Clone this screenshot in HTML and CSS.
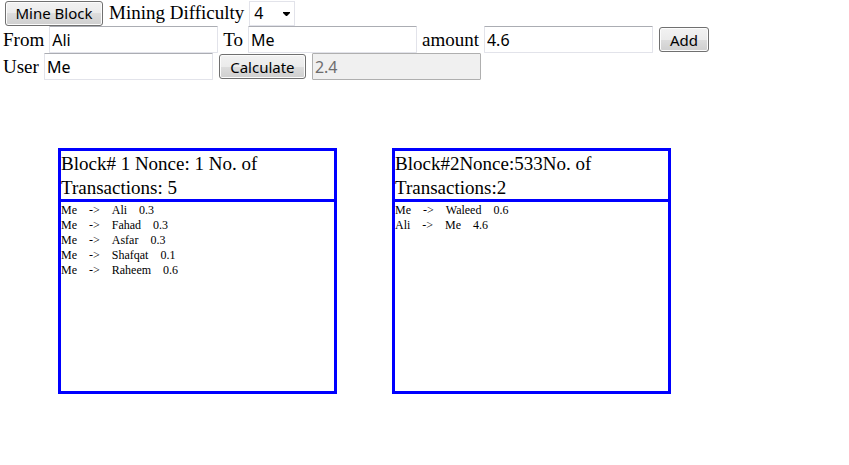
FILE: index.html
```html
<!DOCTYPE html>
<html lang="en">
<head>
<meta charset="utf-8">
<title>Block Chain</title>
<link rel="stylesheet" href="styles.css">
</head>
<body>
<form class="controls">
  <div class="row row-mine">
    <button type="button" class="btn btn-mine">Mine Block</button>
    <label for="difficulty">Mining Difficulty</label>
    <span class="select-wrap"><select id="difficulty" class="select"><option>4</option></select><svg class="arrow" viewBox="0 0 7 4" aria-hidden="true"><path d="M0 0h7v1L4 4H3L0 1z"/></svg></span>
  </div>
  <div class="row">
    <label for="from">From</label>
    <input id="from" class="field" type="text" value="Ali">
    <label for="to">To</label>
    <input id="to" class="field" type="text" value="Me">
    <label for="amount">amount</label>
    <input id="amount" class="field" type="text" value="4.6">
    <button type="button" class="btn btn-add">Add</button>
  </div>
  <div class="row">
    <label for="user">User</label>
    <input id="user" class="field" type="text" value="Me">
    <button type="button" class="btn btn-calc">Calculate</button>
    <input class="field" type="text" value="2.4" aria-label="Balance" disabled>
  </div>
</form>
<main class="chain">
  <section class="block">
    <h2 class="block-head">Block# 1 Nonce: 1 No. of Transactions: 5</h2>
    <ul class="list">
      <li><span>Me</span><span>-&gt;</span><span>Ali</span><span>0.3</span></li>
      <li><span>Me</span><span>-&gt;</span><span>Fahad</span><span>0.3</span></li>
      <li><span>Me</span><span>-&gt;</span><span>Asfar</span><span>0.3</span></li>
      <li><span>Me</span><span>-&gt;</span><span>Shafqat</span><span>0.1</span></li>
      <li><span>Me</span><span>-&gt;</span><span>Raheem</span><span>0.6</span></li>
    </ul>
  </section>
  <section class="block">
    <h2 class="block-head">Block#2Nonce:533No. of Transactions:2</h2>
    <ul class="list">
      <li><span>Me</span><span>-&gt;</span><span>Waleed</span><span>0.6</span></li>
      <li><span>Ali</span><span>-&gt;</span><span>Me</span><span>4.6</span></li>
    </ul>
  </section>
</main>
</body>
</html>
```
FILE: styles.css
```css
* { box-sizing: border-box; }
body {
  margin: 0;
  background: #fff;
  color: #000;
  font-family: "Liberation Serif", "Times New Roman", serif;
  font-size: 19px;
}
.controls { padding-left: 3px; }
.row {
  display: flex;
  align-items: center;
  gap: 5px;
  height: 27px;
}
.row-mine {
  height: 26px;
  padding-left: 1px;
}
.btn, .field, .select {
  font-family: "Noto Sans", "Open Sans", sans-serif;
  font-size: 16px;
  line-height: 20px;
  color: #000;
}
.btn {
  height: 25px;
  margin: 0 1px;
  padding: 0;
  border: 1px solid #707070;
  border-radius: 3px;
  background: linear-gradient(#f2f2f2, #ebebeb 50%, #dddddd 50%, #cfcfcf);
  box-shadow: inset 0 0 0 1px #fcfcfc;
  font-size: 15px;
}
.btn-mine { width: 98px; }
.btn-add { width: 50px; }
.btn-calc { width: 87px; }
.field {
  width: 169px;
  height: 27px;
  padding: 0 2px;
  border: 1px solid #e2e3ea;
  border-top-color: #abadb3;
  border-radius: 1px;
  background: #fff;
}
.field:disabled {
  border-color: #afafaf;
  background: #f0f0f0;
  color: #6d6d6d;
}
.select-wrap { position: relative; display: flex; }
.select {
  width: 46px;
  height: 25px;
  padding: 0 4px;
  border: 1px solid #e2e3ea;
  background: #fff;
  appearance: none;
}
.arrow {
  position: absolute;
  right: 5px;
  top: 11px;
  width: 7px;
  height: 4px;
  pointer-events: none;
}
.chain {
  display: flex;
  flex-wrap: wrap;
  gap: 55px;
  padding: 68px 58px;
}
.block {
  width: 279px;
  min-height: 246px;
  border: 3px solid #00f;
}
.block-head {
  height: 51px;
  margin: 0;
  padding-top: 1px;
  border-bottom: 3px solid #00f;
  font-size: 19px;
  font-weight: normal;
  line-height: 24px;
}
.list {
  margin: 0;
  padding: 1px 0;
  list-style: none;
  font-size: 12px;
  line-height: 15px;
}
.list li { display: flex; gap: 12px; }
```
